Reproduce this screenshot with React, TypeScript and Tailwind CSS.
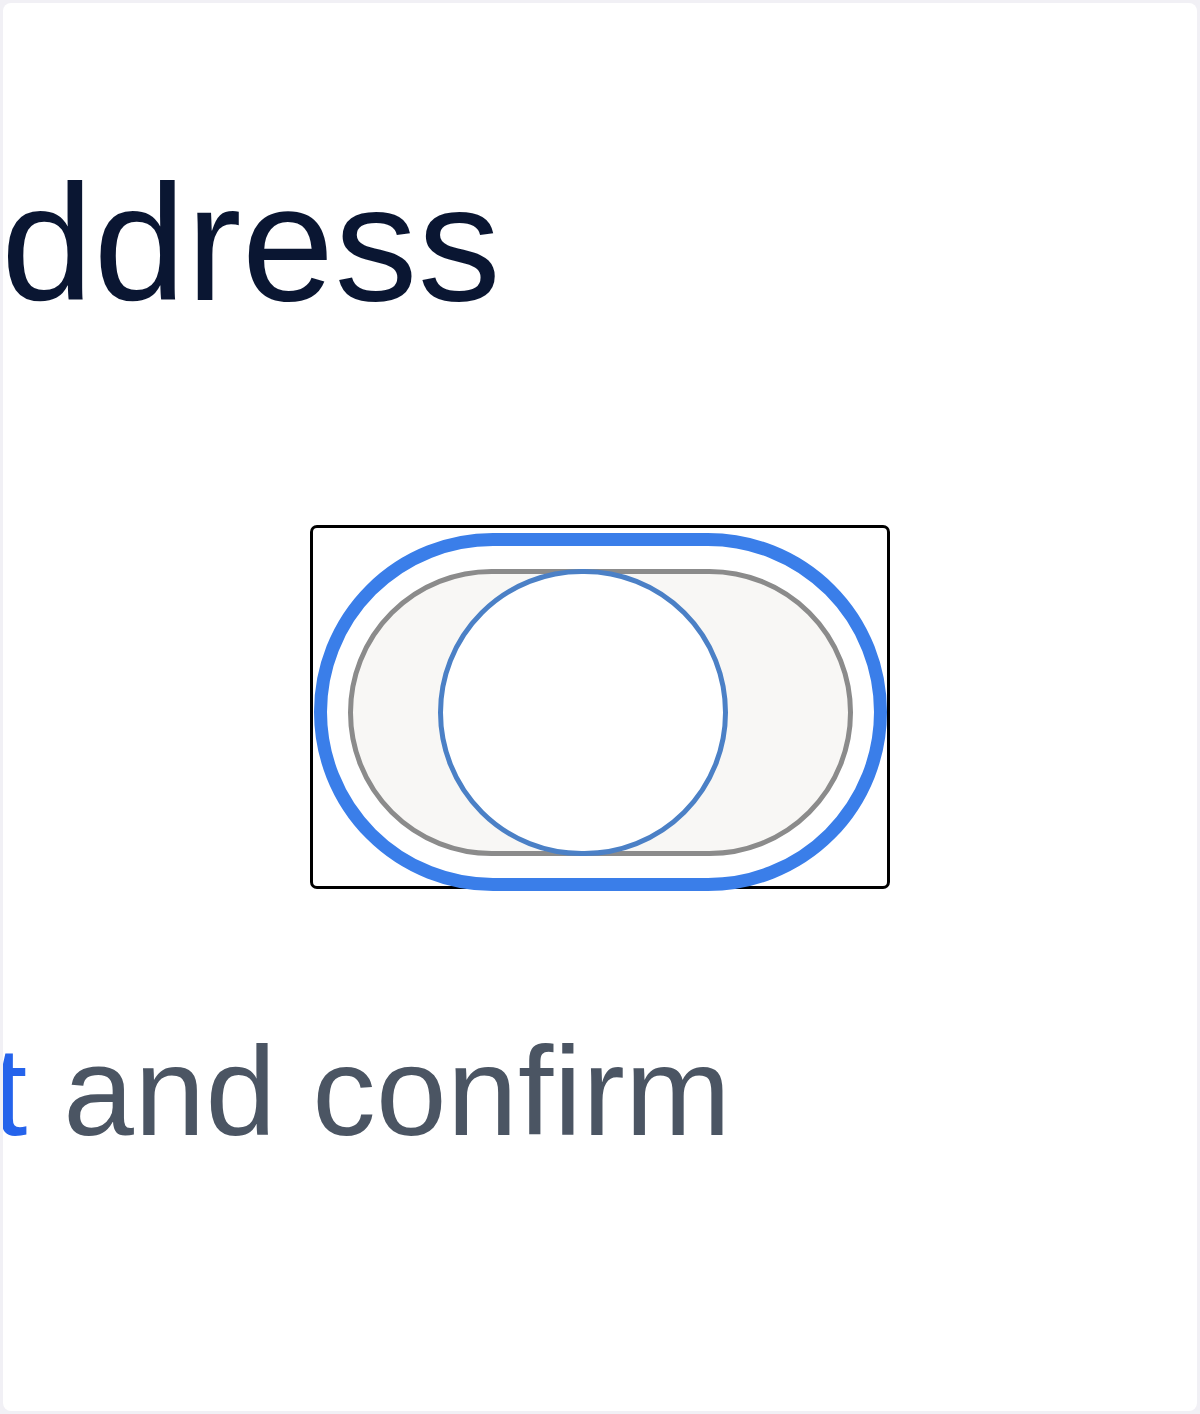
export default function App() {
  return (
    <div className="min-h-screen bg-[#f1f0f5] p-[3px] font-['Liberation_Sans',Arial,sans-serif]">
      <div className="h-[1408px] overflow-hidden rounded-lg bg-white pt-[157px]">
        <h1 className="ml-[-2px] whitespace-nowrap text-[166px] font-normal leading-none tracking-[0.3px] text-[#0a1632]">
          ddress
        </h1>

        {/* focused switch with its outline */}
        <div className="ml-[307px] mt-[199px] h-[364px] w-[580px] rounded-[7px] border-[3px] border-black">
          <div className="ml-px mt-[5px] flex h-[358px] w-[573px] items-center justify-center rounded-full border-[13px] border-[#3a7ee9] bg-white">
            <div
              role="switch"
              aria-checked="false"
              className="flex h-[287px] w-[505px] items-center rounded-full border-[5px] border-[#8b8b8b] bg-[#f8f7f5]"
            >
              <div className="ml-[85px] h-[287px] w-[290px] shrink-0 rounded-full border-[5px] border-[#4b80c6] bg-white" />
            </div>
          </div>
        </div>

        <p className="ml-[-11px] mt-[139px] whitespace-nowrap text-[127px] leading-none tracking-[0.4px] text-[#4b5563]">
          <span className="text-[#2563eb]">t</span> and confirm
        </p>
      </div>
    </div>
  );
}
